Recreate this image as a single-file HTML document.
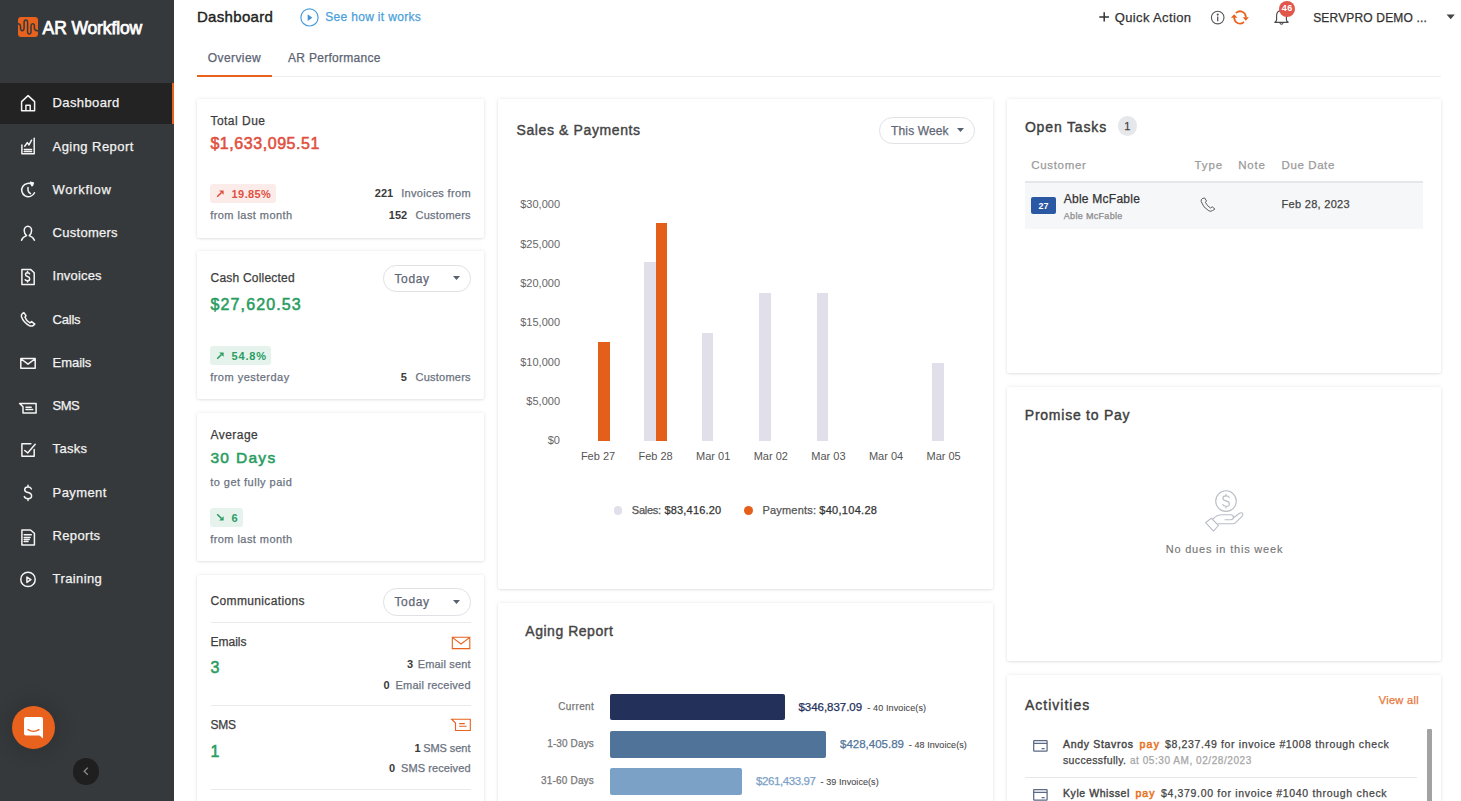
<!DOCTYPE html><html><head><meta charset="utf-8"><style>
*{margin:0;padding:0;box-sizing:border-box}
html,body{width:1461px;height:801px;overflow:hidden;background:#fff;font-family:"Liberation Sans",sans-serif}
.t{position:absolute;white-space:nowrap;line-height:1;-webkit-text-stroke:0.25px currentColor}
.a{position:absolute}
.card{position:absolute;background:#fff;border-radius:2px;box-shadow:0 0 4px rgba(0,0,0,0.09),0 1px 2px rgba(50,65,90,0.09)}
svg{position:absolute;overflow:visible}
</style></head><body>
<div class="a" style="left:0;top:0;width:174px;height:801px;background:#36393b"></div>
<div class="a" style="left:17.5px;top:16.8px;width:20px;height:20px;border-radius:3px;background:#e8611d"></div>
<svg style="left:17.5px;top:16.8px" width="20" height="20" viewBox="0 0 20 20"><path d="M0 6.8 Q2.2 6.8 2.5 9.2 V11 Q2.7 13.7 4.3 13.7 Q5.9 13.7 6.1 11 V5.2 Q6.3 3 7.9 3 Q9.5 3 9.6 5.2 V14.8 Q9.7 17.1 11.3 17.1 Q12.9 17.1 13 14.8 V8.8 Q13.2 6.8 14.7 6.8 Q16.3 6.8 16.4 8.8 V11.4 Q16.6 13.8 20 13.8" fill="none" stroke="#36393b" stroke-width="1.5"/></svg>
<div class="t" style="left:42.60px;top:20.00px;font-size:17.5px;color:white;letter-spacing:-0.120px;-webkit-text-stroke:0.75px currentColor;">AR Workflow</div>
<div class="a" style="left:0;top:83px;width:171.5px;height:40.5px;background:#232323"></div>
<div class="a" style="left:171.5px;top:83px;width:2.5px;height:40.5px;background:#e8611d"></div>
<div class="t" style="left:52.60px;top:96.00px;font-size:13px;color:#f2f2f2;letter-spacing:0.375px;">Dashboard</div>
<svg style="left:14px;top:88.00px" width="30" height="30" viewBox="0 0 30 30" fill="none" stroke="#f4f4f4" stroke-width="1.5" stroke-linejoin="round" stroke-linecap="round"><path d="M7.6 22.7 V13.6 L14.1 7.6 L20.6 13.6 V22.7 Z M11.9 22.7 V17.2 H16.2 V22.7"/></svg>
<div class="t" style="left:52.60px;top:140.00px;font-size:13px;color:#f2f2f2;letter-spacing:0.438px;">Aging Report</div>
<svg style="left:14px;top:131.27px" width="30" height="30" viewBox="0 0 30 30" fill="none" stroke="#f4f4f4" stroke-width="1.5" stroke-linejoin="round" stroke-linecap="round"><path d="M7.9 14 V22.8 H20.2 V7.3 M10.7 15.2 L13.3 11.6 L15 14 L17.6 9.2 M10.3 18.4 H17.6 M10.3 20.4 H17.6"/></svg>
<div class="t" style="left:52.60px;top:183.00px;font-size:13px;color:#f2f2f2;letter-spacing:0.713px;">Workflow</div>
<svg style="left:14px;top:174.54px" width="30" height="30" viewBox="0 0 30 30" fill="none" stroke="#f4f4f4" stroke-width="1.5" stroke-linejoin="round" stroke-linecap="round"><path d="M18.7 9.9 A6.7 6.7 0 1 0 20.5 17.8 M14 12.4 V15.5 Q14.5 17.5 16.5 18.7"/><path d="M16.4 7.3 L19.4 7.9 L18.1 10.8 Z" fill="#fff"/></svg>
<div class="t" style="left:52.60px;top:226.00px;font-size:13px;color:#f2f2f2;letter-spacing:0.269px;">Customers</div>
<svg style="left:14px;top:217.81px" width="30" height="30" viewBox="0 0 30 30" fill="none" stroke="#f4f4f4" stroke-width="1.5" stroke-linejoin="round" stroke-linecap="round"><path d="M7.5 22.3 Q8.5 19 12.6 17.6 Q10.2 16 10.2 12.6 A3.7 4.3 0 0 1 17.6 12.6 Q17.6 16 15.2 17.6 Q19.3 19 20.4 22.3"/></svg>
<div class="t" style="left:52.60px;top:269.00px;font-size:13px;color:#f2f2f2;letter-spacing:0.187px;">Invoices</div>
<svg style="left:14px;top:261.08px" width="30" height="30" viewBox="0 0 30 30" fill="none" stroke="#f4f4f4" stroke-width="1.5" stroke-linejoin="round" stroke-linecap="round"><path d="M7.9 8.4 H16.5 L20.2 11.8 V23.4 H7.9 Z M15.6 12.8 Q15 11.8 13.5 11.8 Q11.5 11.8 11.5 13.5 Q11.5 15.1 13.5 15.6 Q15.7 16.1 15.7 17.9 Q15.7 19.7 13.5 19.7 Q11.9 19.7 11.2 18.7 M13.5 10.6 V11.8 M13.5 19.7 V21"/></svg>
<div class="t" style="left:52.60px;top:313.00px;font-size:13px;color:#f2f2f2;letter-spacing:-0.224px;">Calls</div>
<svg style="left:14px;top:304.35px" width="30" height="30" viewBox="0 0 30 30" fill="none" stroke="#f4f4f4" stroke-width="1.5" stroke-linejoin="round" stroke-linecap="round"><path d="M8.6 9.3 Q7 10.3 7.4 12.6 Q9.5 18.8 15.6 21.8 Q17.8 22.6 19.4 21.3 L20.8 20.2 L17.6 17.6 L15.9 18.9 Q12.2 16.8 10.9 13.1 L12 11.7 L9.9 8.6 Z"/></svg>
<div class="t" style="left:52.60px;top:356.00px;font-size:13px;color:#f2f2f2;letter-spacing:-0.061px;">Emails</div>
<svg style="left:14px;top:347.62px" width="30" height="30" viewBox="0 0 30 30" fill="none" stroke="#f4f4f4" stroke-width="1.5" stroke-linejoin="round" stroke-linecap="round"><path d="M6.8 10.6 H21.2 V20.3 H6.8 Z M7.2 11 L14 16.2 L20.8 11"/></svg>
<div class="t" style="left:52.60px;top:399.00px;font-size:13px;color:#f2f2f2;letter-spacing:-0.585px;">SMS</div>
<svg style="left:14px;top:390.89px" width="30" height="30" viewBox="0 0 30 30" fill="none" stroke="#f4f4f4" stroke-width="1.5" stroke-linejoin="round" stroke-linecap="round"><path d="M5.6 12.4 H22.1 V22.1 H9 V15.7 Z M12 16.3 H17.2 M12 18.5 H18.7"/></svg>
<div class="t" style="left:52.60px;top:442.00px;font-size:13px;color:#f2f2f2;letter-spacing:0.318px;">Tasks</div>
<svg style="left:14px;top:434.16px" width="30" height="30" viewBox="0 0 30 30" fill="none" stroke="#f4f4f4" stroke-width="1.5" stroke-linejoin="round" stroke-linecap="round"><path d="M16.9 9.7 H7.9 V22.3 H20.2 V15.4 M10.7 16.5 L13.7 18.9 L21.2 10.3"/></svg>
<div class="t" style="left:52.60px;top:486.00px;font-size:13px;color:#f2f2f2;letter-spacing:0.400px;">Payment</div>
<svg style="left:14px;top:477.43px" width="30" height="30" viewBox="0 0 30 30" fill="none" stroke="#f4f4f4" stroke-width="1.5" stroke-linejoin="round" stroke-linecap="round"><path d="M17.4 12 Q16.6 10.1 14 10.1 Q10.7 10.1 10.7 12.7 Q10.7 14.9 14 15.6 Q17.6 16.3 17.6 19.1 Q17.6 21.7 14 21.7 Q11.1 21.7 10.3 19.6 M14 8.2 V10.1 M14 21.7 V23.6"/></svg>
<div class="t" style="left:52.60px;top:529.00px;font-size:13px;color:#f2f2f2;letter-spacing:0.330px;">Reports</div>
<svg style="left:14px;top:520.70px" width="30" height="30" viewBox="0 0 30 30" fill="none" stroke="#f4f4f4" stroke-width="1.5" stroke-linejoin="round" stroke-linecap="round"><path d="M7.9 9 H16.5 L20.4 12.3 V24 H7.9 Z M10.2 13.7 H17.3 M10.2 16.5 H16.1 M10.2 18.5 H15.2 M10.2 20.5 H14"/></svg>
<div class="t" style="left:52.60px;top:572.00px;font-size:13px;color:#f2f2f2;letter-spacing:0.388px;">Training</div>
<svg style="left:14px;top:563.97px" width="30" height="30" viewBox="0 0 30 30" fill="none" stroke="#f4f4f4" stroke-width="1.5" stroke-linejoin="round" stroke-linecap="round"><circle cx="14" cy="15.4" r="7.2"/><path d="M12.9 13.1 L16.9 15.7 L12.9 18.4 Z"/></svg>
<div class="a" style="left:12px;top:706px;width:43.2px;height:43.2px;border-radius:50%;background:#e8611d;box-shadow:0 0 16px 8px rgba(0,0,0,0.09)"></div>
<svg style="left:24.4px;top:716.8px" width="19" height="22" viewBox="0 0 19 22"><path d="M2 0 H17 Q19 0 19 2 V21.5 L15.5 18.5 H2 Q0 18.5 0 16.5 V2 Q0 0 2 0 Z" fill="#fff"/><path d="M4 12.6 Q9.5 16 15 12.6" fill="none" stroke="#e8611d" stroke-width="1.3" stroke-linecap="round"/></svg>
<div class="a" style="left:72.8px;top:758.4px;width:26.4px;height:26.4px;border-radius:50%;background:#1f1f1f"></div>
<svg style="left:72.8px;top:758.4px" width="26.4" height="26.4" viewBox="0 0 26 26"><path d="M14.6 9.5 L11 13 L14.6 16.5" fill="none" stroke="#8a8a8a" stroke-width="1.3"/></svg>
<div class="t" style="left:196.90px;top:9.00px;font-size:15px;color:#222;-webkit-text-stroke:0.4px currentColor;letter-spacing:0.327px;">Dashboard</div>
<svg style="left:300px;top:8px" width="19" height="19" viewBox="0 0 19 19"><circle cx="9.5" cy="9.4" r="8.6" fill="none" stroke="#4b9fdb" stroke-width="1.2"/><path d="M7.7 6.2 L12.3 9.7 L7.7 13.1 Z" fill="#4193d8"/></svg>
<div class="t" style="left:325.20px;top:11.00px;font-size:12px;color:#4b9fdb;letter-spacing:0.326px;">See how it works</div>
<svg style="left:1098px;top:11px" width="12" height="12" viewBox="0 0 12 12"><path d="M6.2 1.2 V10.6 M1.3 5.9 H11" stroke="#333" stroke-width="1.5" fill="none"/></svg>
<div class="t" style="left:1114.70px;top:11.00px;font-size:13px;color:#333;letter-spacing:0.366px;">Quick Action</div>
<svg style="left:1210px;top:10px" width="16" height="16" viewBox="0 0 16 16" fill="none" stroke="#555" stroke-width="1.1"><circle cx="7.7" cy="7.6" r="6.3"/><path d="M7.7 6.6 V11.2" stroke-width="1.3"/><circle cx="7.7" cy="4.6" r="0.5" fill="#555"/></svg>
<svg style="left:1230px;top:9px" width="20" height="17" viewBox="0 0 20 17" fill="none" stroke="#e8611d" stroke-width="1.8" stroke-linecap="round"><path d="M6.4 3.6 A5.8 5.8 0 0 1 15.8 7.6"/><path d="M13.4 13.4 A5.8 5.8 0 0 1 4.2 9"/><path d="M12.7 8.3 H18.9 L15.8 11.7 Z M0.9 8.8 H7.5 L4.2 5.2 Z" fill="#e8611d" stroke="none"/></svg>
<svg style="left:1272px;top:9px" width="18" height="18" viewBox="0 0 18 18" fill="none" stroke="#4a4a4a" stroke-width="1.15" stroke-linejoin="round"><path d="M2.8 13.3 Q4.6 12.3 4.6 10.8 V6.6 Q4.6 1.6 9.5 1.6 Q14.4 1.6 14.4 6.6 V10.8 Q14.4 12.3 16.2 13.3 Z"/><path d="M8 13.7 A1.5 1.5 0 0 0 11 13.7"/></svg>
<div class="a" style="left:1279px;top:0.6px;width:16px;height:16px;border-radius:50%;background:#e2574c"></div>
<div class="t" style="left:1281.84px;top:4.00px;font-size:9px;color:#fff;font-weight:700;-webkit-text-stroke:0;letter-spacing:0.300px;">46</div>
<div class="t" style="left:1313.20px;top:12.00px;font-size:12px;color:#333;letter-spacing:0.171px;">SERVPRO DEMO ...</div>
<svg style="left:1446px;top:14px" width="10" height="6" viewBox="0 0 10 6"><path d="M0.6 0.6 H8.8 L4.7 5.3 Z" fill="#444"/></svg>
<div class="t" style="left:207.70px;top:52.00px;font-size:12px;color:#5c6473;letter-spacing:0.427px;">Overview</div>
<div class="t" style="left:288.00px;top:52.00px;font-size:12px;color:#5c6473;letter-spacing:0.292px;">AR Performance</div>
<div class="a" style="left:271.8px;top:75.5px;width:1169.2px;height:1px;background:#eeeeee"></div>
<div class="a" style="left:196.6px;top:74.8px;width:75.2px;height:2.2px;background:#e8611d"></div>
<div class="card" style="left:196.5px;top:99.2px;width:287.9px;height:138.6px"></div>
<div class="card" style="left:196.5px;top:251.2px;width:287.9px;height:148.0px"></div>
<div class="card" style="left:196.5px;top:413px;width:287.9px;height:148.3px"></div>
<div class="card" style="left:196.5px;top:575px;width:287.9px;height:255.0px"></div>
<div class="card" style="left:497.8px;top:99.2px;width:495.4px;height:490.3px"></div>
<div class="card" style="left:497.8px;top:603.2px;width:495.4px;height:226.8px"></div>
<div class="card" style="left:1006.8px;top:99.1px;width:434.3px;height:273.8px"></div>
<div class="card" style="left:1006.8px;top:386.8px;width:434.3px;height:274.6px"></div>
<div class="card" style="left:1006.8px;top:674.7px;width:434.3px;height:155.3px"></div>
<div class="t" style="left:210.40px;top:115.00px;font-size:12px;color:#3d3d3d;letter-spacing:0.488px;">Total Due</div>
<div class="t" style="left:210.40px;top:136.00px;font-size:16px;color:#df5040;-webkit-text-stroke:0.55px currentColor;letter-spacing:0.557px;">$1,633,095.51</div>
<div class="a" style="left:210px;top:184.2px;width:66.1px;height:19.2px;border-radius:3px;background:#fbecea"></div>
<svg style="left:216.3px;top:189.3px" width="9" height="9" viewBox="0 0 9 9"><path d="M1.2 7.8 L5.5 3.5" fill="none" stroke="#df5040" stroke-width="1.6"/><path d="M3.2 1.4 H7.6 V5.8 Z" fill="#df5040"/></svg>
<div class="t" style="left:231.60px;top:189.00px;font-size:11px;color:#df5040;font-weight:700;-webkit-text-stroke:0;letter-spacing:0.398px;">19.85%</div>
<div class="t" style="left:210.20px;top:210.00px;font-size:11px;color:#6b7280;letter-spacing:0.443px;">from last month</div>
<div class="t" style="left:374.80px;top:188.00px;font-size:11px;color:#3a3a3a;font-weight:700;-webkit-text-stroke:0;letter-spacing:0.023px;">221</div>
<div class="t" style="left:401.20px;top:188.00px;font-size:11px;color:#6b7280;letter-spacing:0.333px;">Invoices from</div>
<div class="t" style="left:388.80px;top:210.00px;font-size:11px;color:#3a3a3a;font-weight:700;-webkit-text-stroke:0;letter-spacing:0.023px;">152</div>
<div class="t" style="left:415.60px;top:210.00px;font-size:11px;color:#6b7280;letter-spacing:0.228px;">Customers</div>
<div class="t" style="left:210.60px;top:272.00px;font-size:12px;color:#3d3d3d;letter-spacing:0.202px;">Cash Collected</div>
<div class="a" style="left:383.3px;top:265.2px;width:87.4px;height:26.4px;border:1px solid #dfe1e5;border-radius:13.2px"></div>
<div class="t" style="left:394.40px;top:273.00px;font-size:12px;color:#5f6775;letter-spacing:0.670px;">Today</div>
<svg style="left:452.6px;top:276.2px" width="7" height="4" viewBox="0 0 7 4"><path d="M0 0 H7 L3.5 4 Z" fill="#59616e"/></svg>
<div class="t" style="left:210.60px;top:297.00px;font-size:16px;color:#2a9d62;-webkit-text-stroke:0.55px currentColor;letter-spacing:1.102px;">$27,620.53</div>
<div class="a" style="left:210px;top:346.1px;width:60.9px;height:18.6px;border-radius:3px;background:#e6f3ec"></div>
<svg style="left:216.3px;top:350.9px" width="9" height="9" viewBox="0 0 9 9"><path d="M1.2 7.8 L5.5 3.5" fill="none" stroke="#2a9d62" stroke-width="1.6"/><path d="M3.2 1.4 H7.6 V5.8 Z" fill="#2a9d62"/></svg>
<div class="t" style="left:231.60px;top:351.00px;font-size:11px;color:#2a9d62;font-weight:700;-webkit-text-stroke:0;letter-spacing:0.828px;">54.8%</div>
<div class="t" style="left:210.20px;top:372.00px;font-size:11px;color:#6b7280;letter-spacing:0.481px;">from yesterday</div>
<div class="t" style="left:400.80px;top:372.00px;font-size:11px;color:#3a3a3a;font-weight:700;-webkit-text-stroke:0;letter-spacing:0.082px;">5</div>
<div class="t" style="left:415.60px;top:372.00px;font-size:11px;color:#6b7280;letter-spacing:0.228px;">Customers</div>
<div class="t" style="left:210.40px;top:429.00px;font-size:12px;color:#3d3d3d;letter-spacing:0.487px;">Average</div>
<div class="t" style="left:210.40px;top:450.00px;font-size:15.5px;color:#2a9d62;-webkit-text-stroke:0.55px currentColor;letter-spacing:1.323px;">30 Days</div>
<div class="t" style="left:210.20px;top:477.00px;font-size:11px;color:#6b7280;letter-spacing:0.475px;">to get fully paid</div>
<div class="a" style="left:210px;top:507.8px;width:33.3px;height:19.2px;border-radius:3px;background:#e6f3ec"></div>
<svg style="left:216.3px;top:512.9px" width="9" height="9" viewBox="0 0 9 9"><path d="M1.2 1.2 L5.5 5.5" fill="none" stroke="#2a9d62" stroke-width="1.6"/><path d="M3.2 7.6 H7.6 V3.2 Z" fill="#2a9d62"/></svg>
<div class="t" style="left:231.60px;top:513.00px;font-size:11px;color:#2a9d62;font-weight:700;-webkit-text-stroke:0;letter-spacing:0.882px;">6</div>
<div class="t" style="left:210.20px;top:534.00px;font-size:11px;color:#6b7280;letter-spacing:0.443px;">from last month</div>
<div class="t" style="left:210.50px;top:595.00px;font-size:12px;color:#3d3d3d;letter-spacing:0.356px;">Communications</div>
<div class="a" style="left:383.2px;top:588.3px;width:87.7px;height:27.3px;border:1px solid #dfe1e5;border-radius:13.7px"></div>
<div class="t" style="left:394.40px;top:596.00px;font-size:12px;color:#5f6775;letter-spacing:0.670px;">Today</div>
<svg style="left:452.6px;top:599.8px" width="7" height="4" viewBox="0 0 7 4"><path d="M0 0 H7 L3.5 4 Z" fill="#59616e"/></svg>
<div class="a" style="left:210.5px;top:622px;width:260.4px;height:1px;background:#e9eaec"></div>
<div class="t" style="left:210.50px;top:636.00px;font-size:12px;color:#3d3d3d;">Emails</div>
<svg style="left:451px;top:636px" width="20" height="14" viewBox="0 0 20 14" fill="none" stroke="#e8611d" stroke-width="1.1"><path d="M1.3 1.3 H18.8 V12.6 H1.3 Z M1.6 1.6 L10 8 L18.5 1.6"/></svg>
<div class="t" style="left:210.50px;top:660.00px;font-size:16px;color:#2a9d62;-webkit-text-stroke:0.55px currentColor;">3</div>
<div class="t" style="left:407.00px;top:659.00px;font-size:11px;color:#3a3a3a;font-weight:700;-webkit-text-stroke:0;letter-spacing:0.182px;">3</div>
<div class="t" style="left:417.70px;top:659.00px;font-size:11px;color:#6b7280;letter-spacing:0.161px;">Email sent</div>
<div class="t" style="left:383.60px;top:680.00px;font-size:11px;color:#3a3a3a;font-weight:700;-webkit-text-stroke:0;letter-spacing:0.682px;">0</div>
<div class="t" style="left:395.50px;top:680.00px;font-size:11px;color:#6b7280;letter-spacing:0.220px;">Email received</div>
<div class="a" style="left:210.5px;top:705px;width:260.4px;height:1px;background:#e9eaec"></div>
<div class="t" style="left:210.50px;top:719.00px;font-size:12px;color:#3d3d3d;letter-spacing:-0.300px;">SMS</div>
<svg style="left:450px;top:718px" width="22" height="14" viewBox="0 0 22 14" fill="none" stroke="#e8611d" stroke-width="1.1"><path d="M1.6 1.2 H20.3 V12.5 H5.5 V5 Z M9.2 5.6 H14.8 M9.2 8.2 H16.6"/></svg>
<div class="t" style="left:210.50px;top:744.00px;font-size:16px;color:#2a9d62;-webkit-text-stroke:0.55px currentColor;">1</div>
<div class="t" style="left:414.50px;top:743.00px;font-size:11px;color:#3a3a3a;font-weight:700;-webkit-text-stroke:0;letter-spacing:-1.118px;">1</div>
<div class="t" style="left:423.20px;top:743.00px;font-size:11px;color:#6b7280;letter-spacing:-0.055px;">SMS sent</div>
<div class="t" style="left:389.10px;top:763.00px;font-size:11px;color:#3a3a3a;font-weight:700;-webkit-text-stroke:0;letter-spacing:0.682px;">0</div>
<div class="t" style="left:401.00px;top:763.00px;font-size:11px;color:#6b7280;letter-spacing:0.094px;">SMS received</div>
<div class="a" style="left:210.5px;top:789px;width:260.4px;height:1px;background:#e9eaec"></div>
<div class="t" style="left:516.50px;top:123.00px;font-size:14px;color:#444;-webkit-text-stroke:0.4px currentColor;letter-spacing:0.614px;">Sales &amp; Payments</div>
<div class="a" style="left:879px;top:117px;width:95.5px;height:26.8px;border:1px solid #dfe1e5;border-radius:13.4px"></div>
<div class="t" style="left:891.10px;top:125.00px;font-size:12px;color:#5f6775;letter-spacing:0.130px;">This Week</div>
<svg style="left:956.6px;top:128.2px" width="7" height="4" viewBox="0 0 7 4"><path d="M0 0 H7 L3.5 4 Z" fill="#59616e"/></svg>
<div class="t" style="left:547.76px;top:435.00px;font-size:11px;color:#666;-webkit-text-stroke:0;">$0</div>
<div class="t" style="left:526.36px;top:396.00px;font-size:11px;color:#666;-webkit-text-stroke:0;">$5,000</div>
<div class="t" style="left:520.24px;top:357.00px;font-size:11px;color:#666;-webkit-text-stroke:0;">$10,000</div>
<div class="t" style="left:520.24px;top:317.00px;font-size:11px;color:#666;-webkit-text-stroke:0;">$15,000</div>
<div class="t" style="left:520.24px;top:278.00px;font-size:11px;color:#666;-webkit-text-stroke:0;">$20,000</div>
<div class="t" style="left:520.24px;top:239.00px;font-size:11px;color:#666;-webkit-text-stroke:0;">$25,000</div>
<div class="t" style="left:520.24px;top:199.00px;font-size:11px;color:#666;-webkit-text-stroke:0;">$30,000</div>
<div class="t" style="left:580.88px;top:451.00px;font-size:11px;color:#555;-webkit-text-stroke:0;">Feb 27</div>
<div class="a" style="left:598.00px;top:342.1px;width:11.7px;height:98.50px;background:#e4601a"></div>
<div class="t" style="left:638.48px;top:451.00px;font-size:11px;color:#555;-webkit-text-stroke:0;">Feb 28</div>
<div class="a" style="left:643.90px;top:261.7px;width:11.7px;height:178.90px;background:#e1dfe9"></div>
<div class="a" style="left:655.60px;top:222.5px;width:11.7px;height:218.10px;background:#e4601a"></div>
<div class="t" style="left:696.08px;top:451.00px;font-size:11px;color:#555;-webkit-text-stroke:0;">Mar 01</div>
<div class="a" style="left:701.50px;top:333.4px;width:11.7px;height:107.20px;background:#e1dfe9"></div>
<div class="t" style="left:753.68px;top:451.00px;font-size:11px;color:#555;-webkit-text-stroke:0;">Mar 02</div>
<div class="a" style="left:759.10px;top:293.4px;width:11.7px;height:147.20px;background:#e1dfe9"></div>
<div class="t" style="left:811.28px;top:451.00px;font-size:11px;color:#555;-webkit-text-stroke:0;">Mar 03</div>
<div class="a" style="left:816.70px;top:293.4px;width:11.7px;height:147.20px;background:#e1dfe9"></div>
<div class="t" style="left:868.88px;top:451.00px;font-size:11px;color:#555;-webkit-text-stroke:0;">Mar 04</div>
<div class="t" style="left:926.48px;top:451.00px;font-size:11px;color:#555;-webkit-text-stroke:0;">Mar 05</div>
<div class="a" style="left:931.90px;top:363.2px;width:11.7px;height:77.40px;background:#e1dfe9"></div>
<div class="a" style="left:613.5px;top:506px;width:8.8px;height:8.8px;border-radius:50%;background:#e1dfe9"></div>
<div class="t" style="left:631.80px;top:505.00px;font-size:11px;color:#555;letter-spacing:-0.254px;">Sales:</div>
<div class="t" style="left:664.50px;top:505.00px;font-size:11px;color:#333;letter-spacing:0.172px;">$83,416.20</div>
<div class="a" style="left:744px;top:506px;width:9px;height:9px;border-radius:50%;background:#e4601a"></div>
<div class="t" style="left:762.40px;top:505.00px;font-size:11px;color:#555;letter-spacing:0.204px;">Payments:</div>
<div class="t" style="left:819.30px;top:505.00px;font-size:11px;color:#333;letter-spacing:0.283px;">$40,104.28</div>
<div class="t" style="left:525.30px;top:624.00px;font-size:14px;color:#444;-webkit-text-stroke:0.4px currentColor;letter-spacing:0.526px;">Aging Report</div>
<div class="t" style="left:558.20px;top:702.00px;font-size:10px;color:#777;letter-spacing:0.376px;">Current</div>
<div class="a" style="left:610.4px;top:694.1px;width:174.3px;height:26.3px;border-radius:2px;background:#22305a"></div>
<div class="t" style="left:798.50px;top:702.00px;font-size:11.5px;color:#22305a;letter-spacing:-0.035px;">$346,837.09</div>
<div class="t" style="left:867.30px;top:704.00px;font-size:9px;color:#4a4a4a;letter-spacing:0.120px;-webkit-text-stroke:0.1px currentColor;">- 40 Invoice(s)</div>
<div class="t" style="left:547.20px;top:739.00px;font-size:10px;color:#777;letter-spacing:0.128px;">1-30 Days</div>
<div class="a" style="left:610.4px;top:731.0px;width:215.7px;height:26.9px;border-radius:2px;background:#4f7399"></div>
<div class="t" style="left:840.00px;top:739.00px;font-size:11.5px;color:#4f7399;">$428,405.89</div>
<div class="t" style="left:908.80px;top:741.00px;font-size:9px;color:#4a4a4a;letter-spacing:0.070px;-webkit-text-stroke:0.1px currentColor;">- 48 Invoice(s)</div>
<div class="t" style="left:541.10px;top:776.00px;font-size:10px;color:#777;letter-spacing:0.174px;">31-60 Days</div>
<div class="a" style="left:610.4px;top:767.9px;width:131.8px;height:26.8px;border-radius:2px;background:#7ca1c6"></div>
<div class="t" style="left:756.00px;top:776.00px;font-size:11.5px;color:#7ca1c6;letter-spacing:-0.415px;">$261,433.97</div>
<div class="t" style="left:820.60px;top:778.00px;font-size:9px;color:#4a4a4a;letter-spacing:0.077px;-webkit-text-stroke:0.1px currentColor;">- 39 Invoice(s)</div>
<div class="t" style="left:1024.90px;top:120.00px;font-size:14px;color:#3d3d3d;-webkit-text-stroke:0.4px currentColor;letter-spacing:0.842px;">Open Tasks</div>
<div class="a" style="left:1117.5px;top:116.3px;width:19.4px;height:19.4px;border-radius:50%;background:#e5e7eb"></div>
<div class="t" style="left:1124.14px;top:121.00px;font-size:11px;color:#444;">1</div>
<div class="t" style="left:1031.20px;top:160.00px;font-size:11.5px;color:#9b9b9b;letter-spacing:0.693px;">Customer</div>
<div class="t" style="left:1194.40px;top:160.00px;font-size:11.5px;color:#9b9b9b;letter-spacing:0.923px;">Type</div>
<div class="t" style="left:1238.20px;top:160.00px;font-size:11.5px;color:#9b9b9b;letter-spacing:0.836px;">Note</div>
<div class="t" style="left:1281.60px;top:160.00px;font-size:11.5px;color:#9b9b9b;letter-spacing:0.588px;">Due Date</div>
<div class="a" style="left:1024.6px;top:183px;width:398.4px;height:45.5px;background:#f6f7f9"></div>
<div class="a" style="left:1024.6px;top:181px;width:398.4px;height:2px;background:#e6e7e9"></div>
<div class="a" style="left:1030.9px;top:196.7px;width:25.1px;height:17.8px;border-radius:2px;background:#2b58a3"></div>
<div class="t" style="left:1038.49px;top:202.00px;font-size:9px;color:#fff;font-weight:700;-webkit-text-stroke:0;">27</div>
<div class="t" style="left:1063.80px;top:193.00px;font-size:12px;color:#333;letter-spacing:0.240px;">Able McFable</div>
<div class="t" style="left:1063.80px;top:212.00px;font-size:9px;color:#8b8b8b;letter-spacing:0.316px;">Able McFable</div>
<svg style="left:1199px;top:196px" width="18" height="18" viewBox="0 0 18 18" fill="none" stroke="#555" stroke-width="0.95" stroke-linejoin="round"><path d="M3.3 2.6 Q1.8 3.6 2.2 5.6 Q4 11.5 9.8 14.8 Q11.8 15.8 13.3 14.7 L15.9 13 L13.2 10.8 L11.6 12 Q8 10.1 6.4 6.3 L7.5 4.9 L5.6 1.9 Z"/></svg>
<div class="t" style="left:1281.60px;top:199.00px;font-size:11px;color:#444;letter-spacing:0.288px;">Feb 28, 2023</div>
<div class="t" style="left:1024.80px;top:408.00px;font-size:14px;color:#3d3d3d;-webkit-text-stroke:0.4px currentColor;letter-spacing:0.760px;">Promise to Pay</div>
<svg style="left:1200px;top:486px" width="50" height="50" viewBox="0 0 50 50" fill="none" stroke="#b9bdc6" stroke-width="1.1" stroke-linejoin="round" stroke-linecap="round"><circle cx="26" cy="15.1" r="10.3"/><path d="M29.2 11.6 Q28.4 9.9 26 9.9 Q22.9 9.9 22.9 12.2 Q22.9 14.3 26 14.9 Q29.4 15.6 29.4 17.9 Q29.4 20.3 26 20.3 Q23.4 20.3 22.6 18.6 M26 8.3 V9.9 M26 20.3 V21.9"/><path d="M12.9 33 Q17 28.8 22 28.8 H30.5 Q33.5 28.8 33.5 31.3 Q33.5 33.8 30.5 33.8 H25"/><path d="M33.2 32 L39.5 27.2 Q41.8 26 42.8 27.8 Q43.3 29 42 30.3 L35.6 36.6 Q34.5 37.8 32.5 37.8 H18.3"/><path d="M5.6 36.7 L11.2 32.2 L18.5 39.5 L13.5 45.1 Z"/></svg>
<div class="t" style="left:1165.70px;top:544.00px;font-size:11px;color:#777;letter-spacing:0.800px;-webkit-text-stroke:0.15px currentColor;">No dues in this week</div>
<div class="t" style="left:1025.00px;top:698.00px;font-size:14px;color:#3d3d3d;-webkit-text-stroke:0.4px currentColor;letter-spacing:0.996px;">Activities</div>
<div class="t" style="left:1378.70px;top:695.00px;font-size:11px;color:#e8773a;letter-spacing:0.328px;">View all</div>
<svg style="left:1033.3px;top:740px" width="16" height="13" viewBox="0 0 16 13" fill="none" stroke="#5b6a85" stroke-width="1.25"><rect x="0.7" y="0.7" width="13.4" height="10.3" rx="0.6"/><path d="M0.7 3.4 H14.1 M8.6 8.5 H11.6" /></svg>
<div class="t" style="left:1063.00px;top:739.00px;font-size:10.5px;color:#444;-webkit-text-stroke:0.4px currentColor;letter-spacing:0.687px;">Andy Stavros</div>
<div class="t" style="left:1139.50px;top:739.00px;font-size:10.5px;color:#e8731f;-webkit-text-stroke:0.55px currentColor;letter-spacing:1.285px;">pay</div>
<div class="t" style="left:1165.10px;top:739.00px;font-size:10.5px;color:#444;letter-spacing:0.631px;">$8,237.49 for invoice #1008 through check</div>
<div class="t" style="left:1063.00px;top:755.00px;font-size:10.5px;color:#444;letter-spacing:0.355px;">successfully.</div>
<div class="t" style="left:1129.90px;top:756.00px;font-size:10px;color:#a6a6a6;letter-spacing:0.562px;">at 05:30 AM, 02/28/2023</div>
<div class="a" style="left:1025px;top:777px;width:392.2px;height:1px;background:#e6e6e6"></div>
<svg style="left:1033.3px;top:789.3px" width="16" height="13" viewBox="0 0 16 13" fill="none" stroke="#5b6a85" stroke-width="1.25"><rect x="0.7" y="0.7" width="13.4" height="10.3" rx="0.6"/><path d="M0.7 3.4 H14.1 M8.6 8.5 H11.6" /></svg>
<div class="t" style="left:1063.00px;top:788.00px;font-size:10.5px;color:#444;-webkit-text-stroke:0.4px currentColor;letter-spacing:0.564px;">Kyle Whissel</div>
<div class="t" style="left:1135.40px;top:788.00px;font-size:10.5px;color:#e8731f;-webkit-text-stroke:0.55px currentColor;letter-spacing:1.085px;">pay</div>
<div class="t" style="left:1160.90px;top:788.00px;font-size:10.5px;color:#444;letter-spacing:0.681px;">$4,379.00 for invoice #1040 through check</div>
<div class="a" style="left:1427px;top:728.8px;width:5.2px;height:80px;border-radius:1px;background:#a2a2a2"></div>
</body></html>
